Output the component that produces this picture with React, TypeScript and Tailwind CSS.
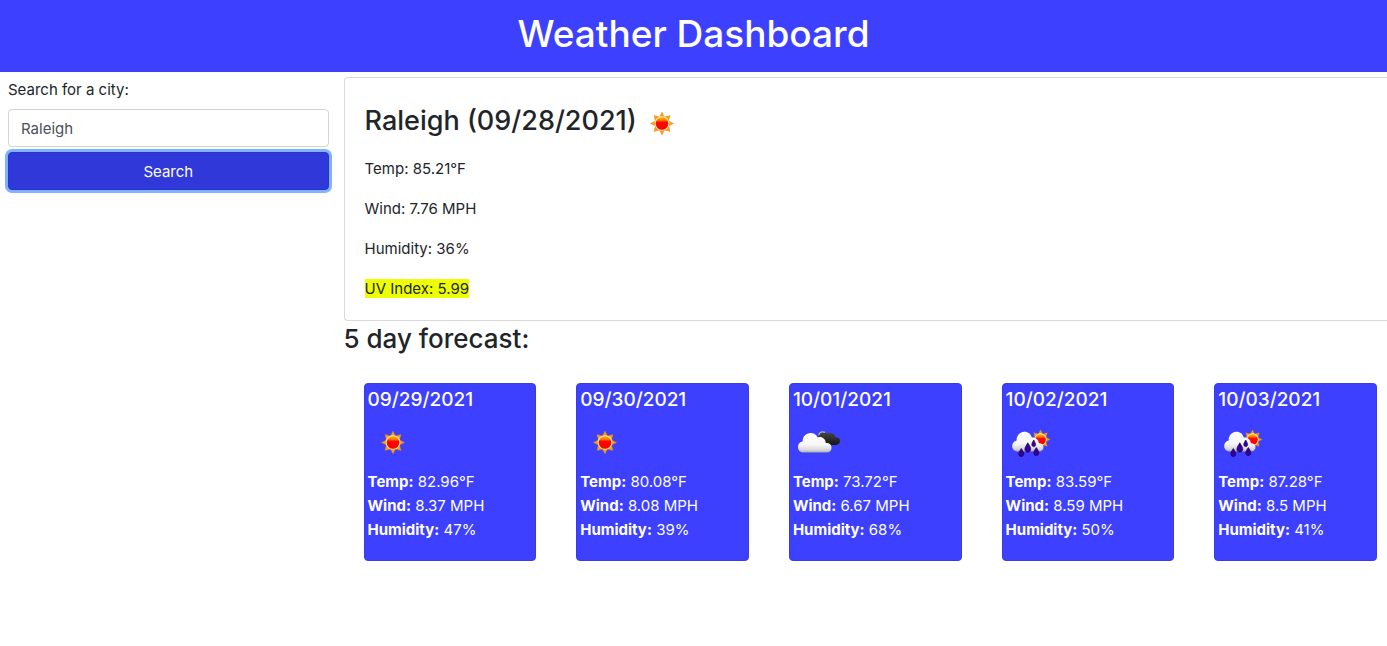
import { useState } from "react";

type IconKind = "sun" | "clouds" | "rain";

function Sun() {
  return (
    <g>
      <path
        fill="#ff9c12"
        stroke="#d9820c"
        strokeWidth=".4"
        d="M0-11.5 2.4-6.6 8-8 6.6-2.4 11.5 0 6.6 2.4 8 8 2.4 6.6 0 11.5-2.4 6.6-8 8-6.6 2.4-11.5 0-6.600-2.400-8-8-2.400-6.600Z"
      />
      <circle r="7.3" fill="#ffe9a8" />
      <circle r="6.3" fill="url(#sun-core)" />
    </g>
  );
}

function WeatherIcon({ kind, label }: { kind: IconKind; label: string }) {
  return (
    <svg viewBox="0 0 50 50" className="block size-[50px] shrink-0" role="img" aria-label={label}>
      <defs>
        <linearGradient id="sun-core" x1="0" y1="0" x2="0" y2="1">
          <stop offset="0" stopColor="#ffb000" />
          <stop offset=".25" stopColor="#ff7a00" />
          <stop offset=".4" stopColor="#ff0800" />
          <stop offset="1" stopColor="#f90000" />
        </linearGradient>
        <linearGradient id="cloud-white" x1="0" y1="0" x2="0" y2="1">
          <stop offset="0" stopColor="#ffffff" />
          <stop offset=".6" stopColor="#f7f7f7" />
          <stop offset=".88" stopColor="#d6d6d6" />
          <stop offset="1" stopColor="#a8a8a8" />
        </linearGradient>
        <linearGradient id="cloud-dark" x1="0" y1="0" x2="0" y2="1">
          <stop offset="0" stopColor="#4a4a4a" />
          <stop offset="1" stopColor="#151515" />
        </linearGradient>
      </defs>
      {kind === "sun" && (
        <g transform="translate(25 24.5)">
          <Sun />
        </g>
      )}
      {kind === "clouds" && (
        <g>
          <path
            fill="url(#cloud-dark)"
            d="M25 19c0-3.500 2-5.500 4.800-5.500 2.200 0 3.400 1 4.200 2 3.500-1.500 7.800 0 8.500 3.700 2.800-.1 4.500 1.300 4.500 3.600 0 2.600-1.800 4.200-4.500 4.200H31Z"
          />
          <path fill="none" stroke="#b5b5b5" strokeWidth="1.200" d="M25.700 17.500c.4-2.400 2-3.600 4.100-3.600 1 0 1.800.2 2.500.7" />
          <path
            fill="url(#cloud-white)"
            d="M10.500 34.500C7 34.500 5 32 5 29c0-3 1.800-5 4.600-5.400-.2-4.700 3.200-8.600 8-8.600 3.500 0 5.800 1.800 7 4.400 4-1.500 8 1.300 8.200 5.600 3.400-.3 5.700 1.800 5.700 4.700 0 2.800-2 4.800-5 4.800Z"
          />
        </g>
      )}
      {kind === "rain" && (
        <g>
          <g transform="translate(34.500 21.500) scale(.84)">
            <Sun />
          </g>
          <path
            fill="url(#cloud-white)"
            d="M12 33.500c-3.500 0-5.800-2.400-5.800-5.500 0-2.800 1.700-4.900 4.400-5.500 0-5 3.300-8.700 7.700-8.700 4 0 6.600 2.300 7.500 5.800 2-.4 4 .2 5.200 1.700 1.200 1 1.800 2.400 1.700 3.700 3.100.2 4.800 1.800 4.800 4.200 0 2.600-2 4.300-4.600 4.300Z"
          />
          <g fill="#35009a" stroke="#1c0062" strokeWidth=".7">
            <path d="M21.800 24.800c1.500 2.700 2.900 4.200 2.900 6.400 0 1.800-1.200 3-2.900 3s-2.900-1.200-2.900-3c0-2.200 1.500-3.700 2.900-6.400Z" />
            <path d="M15.300 30.500c1.300 2.200 2.500 3.600 2.500 5.400 0 1.600-1.100 2.600-2.500 2.600s-2.500-1-2.500-2.600c0-1.800 1.200-3.200 2.500-5.400Z" />
            <path d="M27.700 22c1 1.900 1.900 3 1.900 4.500 0 1.300-.8 2.100-1.900 2.100s-1.900-.8-1.900-2.100c0-1.500.9-2.600 1.900-4.500Z" />
            <path d="M30.300 29.500c1.300 2.200 2.500 3.500 2.500 5.400 0 1.600-1.100 2.600-2.500 2.600s-2.500-1-2.500-2.600c0-1.900 1.200-3.200 2.500-5.400Z" />
          </g>
        </g>
      )}
    </svg>
  );
}

const forecast: { date: string; icon: IconKind; label: string; temp: string; wind: string; humidity: string }[] = [
  { date: "09/29/2021", icon: "sun", label: "Clear", temp: "82.96°F", wind: "8.37 MPH", humidity: "47%" },
  { date: "09/30/2021", icon: "sun", label: "Clear", temp: "80.08°F", wind: "8.08 MPH", humidity: "39%" },
  { date: "10/01/2021", icon: "clouds", label: "Clouds", temp: "73.72°F", wind: "6.67 MPH", humidity: "68%" },
  { date: "10/02/2021", icon: "rain", label: "Rain", temp: "83.59°F", wind: "8.59 MPH", humidity: "50%" },
  { date: "10/03/2021", icon: "rain", label: "Rain", temp: "87.28°F", wind: "8.5 MPH", humidity: "41%" },
];

export default function App() {
  const [city, setCity] = useState("Raleigh");

  return (
    <div className="min-h-screen overflow-x-hidden bg-white font-['Inter',sans-serif] text-[15px] leading-6 text-[#212529]">
      <header className="bg-[#3d40ff] pt-[10px] pb-[14px] text-center text-white">
        <h1 className="text-[37px] leading-12 font-medium">Weather Dashboard</h1>
      </header>

      <div className="flex items-start pt-[5px]">
        <form className="w-[24.77%] shrink-0 pt-px pr-[15px] pl-2" onSubmit={(e) => e.preventDefault()}>
          <label htmlFor="city" className="mb-[7px] block">
            Search for a city:
          </label>
          <input
            id="city"
            type="text"
            value={city}
            onChange={(e) => setCity(e.target.value)}
            className="block h-[38px] w-full rounded border border-[#ced4da] bg-white px-3 text-[#495057] outline-none"
          />
          <button
            type="submit"
            className="mt-[5px] block h-[38px] w-full rounded border border-[#2c33cc] bg-[#3038d9] pt-px text-center text-white ring-3 ring-[#80b3ff] outline-none"
          >
            Search
          </button>
        </form>

        <main className="min-w-0 flex-1">
          <section className="rounded-l border border-r-0 border-[#d9d9d9] px-5 pt-[21px] pb-[19px]">
            <h2 className="mb-2 flex items-start text-[27px] leading-11 font-medium">
              Raleigh (09/28/2021)
              <WeatherIcon kind="sun" label="Clear" />
            </h2>
            <p className="mb-4">Temp: 85.21°F</p>
            <p className="mb-4">Wind: 7.76 MPH</p>
            <p className="mb-4">Humidity: 36%</p>
            <p>
              <span className="bg-[#eeff00]">UV Index: 5.99</span>
            </p>
          </section>

          <h2 className="text-[26px] leading-9 font-medium">5 day forecast:</h2>

          <div className="mt-[26px] mr-[10px] ml-5 grid grid-cols-[173fr_173fr_173fr_173fr_163fr] gap-10">
            {forecast.map((day) => (
              <article
                key={day.date}
                className="rounded border border-[#383be6] bg-[#3d40ff] px-[3px] pt-1 pb-[18px] text-white"
              >
                <h3 className="mb-[6px] text-[19px] leading-6 font-medium">{day.date}</h3>
                <div className="mb-[2px]">
                  <WeatherIcon kind={day.icon} label={day.label} />
                </div>
                <p>
                  <strong className="font-bold">Temp:</strong> {day.temp}
                </p>
                <p>
                  <strong className="font-bold">Wind:</strong> {day.wind}
                </p>
                <p>
                  <strong className="font-bold">Humidity:</strong> {day.humidity}
                </p>
              </article>
            ))}
          </div>
        </main>
      </div>
    </div>
  );
}
